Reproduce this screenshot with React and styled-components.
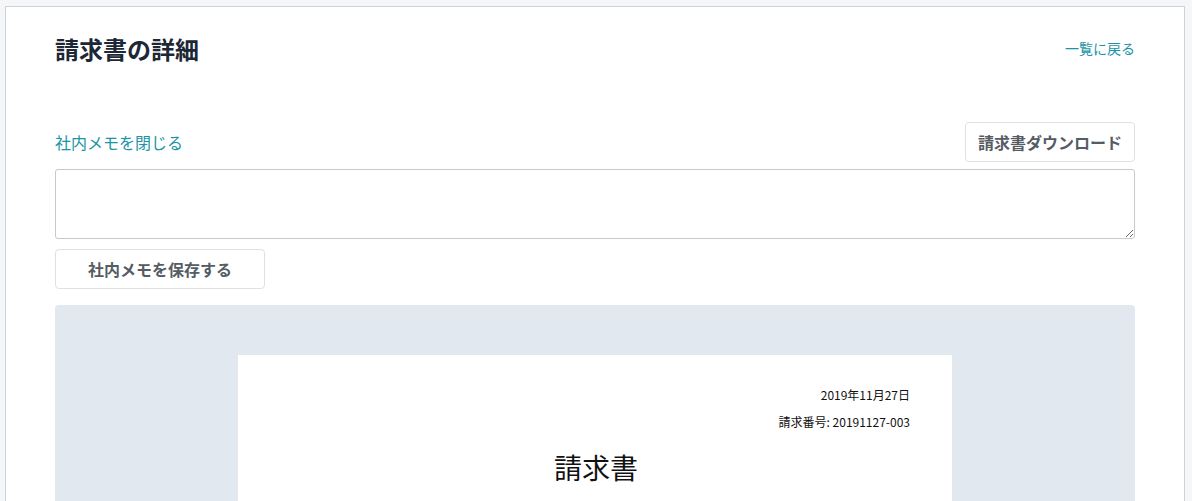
import React from "react";
import styled, { createGlobalStyle } from "styled-components";

const Global = createGlobalStyle`
  html, body { margin: 0; padding: 0; background: #f5f6f8; }
  body { font-family: "Noto Sans CJK JP", "Noto Sans", sans-serif; }
  * { box-sizing: border-box; }
`;

const Page = styled.div`
  padding: 6px 7px 0 5px;
  height: 501px;
  overflow: hidden;
`;

const Card = styled.div`
  background: #fff;
  border: 1px solid #cdd3dc;
  border-bottom: none;
  padding: 27px 49px 0 49px;
  min-height: 520px;
`;

const Header = styled.div`
  display: flex;
  justify-content: space-between;
  align-items: center;
  height: 30px;
`;

const Title = styled.h1`
  margin: 0;
  font-size: 24px;
  font-weight: 700;
  color: #1c2836;
  line-height: 30px;
`;

const Link = styled.a`
  color: #1a94a6;
  font-size: ${(p) => p.$size || 14}px;
  text-decoration: none;
  cursor: pointer;
  line-height: 1;
  margin-bottom: ${(p) => p.$lift || 0}px;
`;

const MemoBar = styled.div`
  display: flex;
  justify-content: space-between;
  align-items: center;
  margin-top: 58px;
  height: 40px;
`;

const Button = styled.button`
  height: 40px;
  width: ${(p) => (p.$w ? `${p.$w}px` : "auto")};
  padding: 0 12px;
  background: #fff;
  border: 1px solid #dde1e6;
  border-radius: 4px;
  font-family: "Noto Sans CJK JP", sans-serif;
  font-size: 16px;
  font-weight: 700;
  color: #555c64;
  cursor: pointer;
`;

const Memo = styled.textarea`
  display: block;
  width: 100%;
  height: 70px;
  margin-top: 7px;
  border: 1px solid #c9c9c9;
  border-radius: 3px;
  resize: vertical;
  font-family: inherit;
  font-size: 14px;
`;

const SaveRow = styled.div`
  margin-top: 10px;
`;

const Preview = styled.div`
  margin-top: 16px;
  background: #e2e8f0;
  border-radius: 4px;
  padding: 50px 0 0;
  display: flex;
  justify-content: center;
  height: 300px;
`;

const Paper = styled.div`
  width: 714px;
  background: #fff;
  padding: 32px 42px 0;
  font-family: "Noto Sans CJK JP", sans-serif;
  color: #111;
`;

const Meta = styled.div`
  text-align: right;
  font-size: 12px;
  line-height: 16px;
  margin: 0 0 11px;
`;

const PaperTitle = styled.div`
  text-align: center;
  font-size: 28px;
  line-height: 34px;
  margin-top: 20px;
  padding-left: 2px;
`;

export default function App() {
  return (
    <>
      <Global />
      <Page>
        <Card>
          <Header>
            <Title>請求書の詳細</Title>
            <Link $size={14} $lift={2}>一覧に戻る</Link>
          </Header>
          <MemoBar>
            <Link $size={16}>社内メモを閉じる</Link>
            <Button>請求書ダウンロード</Button>
          </MemoBar>
          <Memo />
          <SaveRow>
            <Button $w={210}>社内メモを保存する</Button>
          </SaveRow>
          <Preview>
            <Paper>
              <Meta>2019年11月27日</Meta>
              <Meta>請求番号: 20191127-003</Meta>
              <PaperTitle>請求書</PaperTitle>
            </Paper>
          </Preview>
        </Card>
      </Page>
    </>
  );
}
